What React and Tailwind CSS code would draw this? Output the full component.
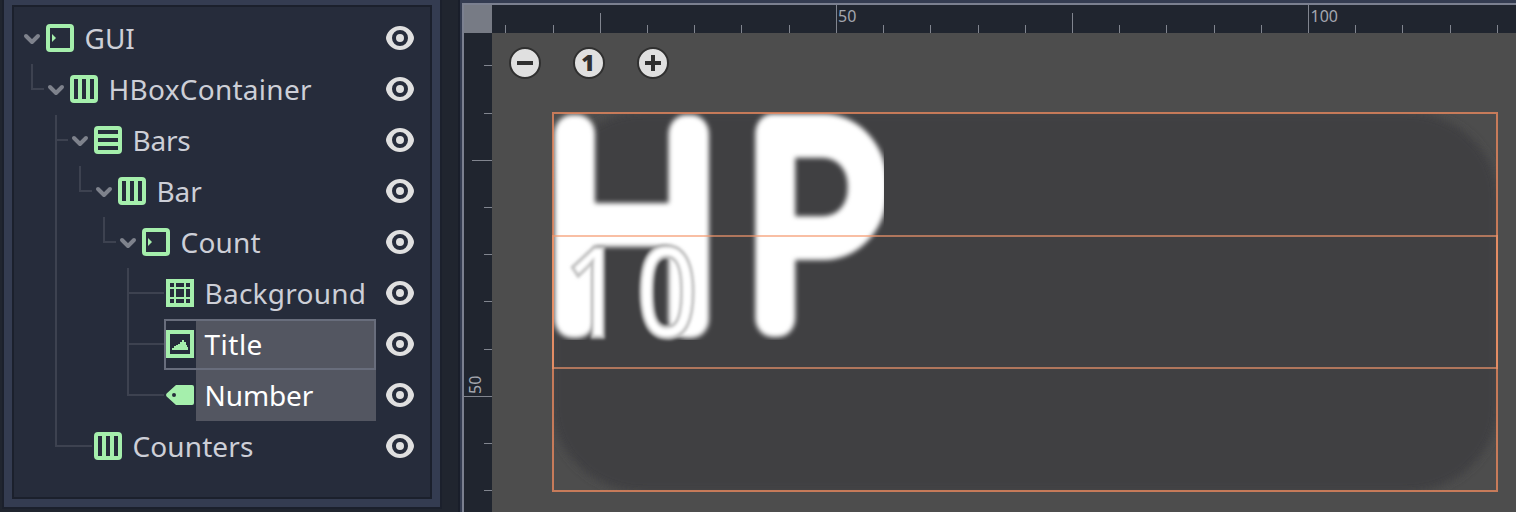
import React from 'react';

const GREEN = '#a5efac';

function ControlIcon() {
  return (
    <svg width="32" height="32" viewBox="0 0 32 32">
      <rect x="4" y="4" width="24" height="24" rx="2" fill="none" stroke={GREEN} strokeWidth="4" />
      <path d="M8 12L12 16L8 20Z" fill={GREEN} />
    </svg>
  );
}

function HBoxIcon() {
  return (
    <svg width="32" height="32" viewBox="0 0 32 32">
      <path
        fill={GREEN}
        fillRule="evenodd"
        d="M6 2H26A4 4 0 0 1 30 6V26A4 4 0 0 1 26 30H6A4 4 0 0 1 2 26V6A4 4 0 0 1 6 2ZM6 6V26H10V6ZM14 6V26H18V6ZM22 6V26H26V6Z"
      />
    </svg>
  );
}

function VBoxIcon() {
  return (
    <svg width="32" height="32" viewBox="0 0 32 32">
      <path
        fill={GREEN}
        fillRule="evenodd"
        d="M6 2H26A4 4 0 0 1 30 6V26A4 4 0 0 1 26 30H6A4 4 0 0 1 2 26V6A4 4 0 0 1 6 2ZM6 6V10H26V6ZM6 14V18H26V14ZM6 22V26H26V22Z"
      />
    </svg>
  );
}

function NinePatchIcon() {
  return (
    <svg width="32" height="32" viewBox="0 0 32 32">
      <path
        fill={GREEN}
        fillRule="evenodd"
        d="M2 2H30V30H2ZM6 6V10H10V6ZM12 6V10H20V6ZM22 6V10H26V6ZM6 12V20H10V12ZM12 12V20H20V12ZM22 12V20H26V12ZM6 22V26H10V22ZM12 22V26H20V22ZM22 22V26H26V22Z"
      />
    </svg>
  );
}

function TextureIcon() {
  return (
    <svg width="32" height="32" viewBox="0 0 32 32" shapeRendering="crispEdges">
      <path fill={GREEN} fillRule="evenodd" d="M2 2H30V30H2ZM6 6V26H26V6Z" />
      <path fill={GREEN} d="M8 22V20H10V18H12V17H14V16H16V14H18V12H20V14H22V17H23V19H24V22Z" />
    </svg>
  );
}

function LabelIcon() {
  return (
    <svg width="32" height="32" viewBox="0 0 32 32">
      <path fill={GREEN} fillRule="evenodd" d="M12 6H28A2 2 0 0 1 30 8V24A2 2 0 0 1 28 26H12L2.6 17.5Q1.4 16 2.6 14.5ZM10 14A2 2 0 1 0 10 18A2 2 0 1 0 10 14Z" />
    </svg>
  );
}

function EyeIcon() {
  return (
    <svg width="32" height="32" viewBox="0 0 32 32">
      <path
        fill="#e0e0e0"
        fillRule="evenodd"
        d="M16 4C9.5 4 4 8.500 2.200 14.500Q1.800 16 2.200 17.500C4 23.500 9.500 28 16 28S28 23.500 29.800 17.500Q30.200 16 29.800 14.500C28 8.500 22.500 4 16 4ZM16 8A8 8 0 1 1 16 24A8 8 0 1 1 16 8ZM16 12A4 4 0 1 0 16 20A4 4 0 1 0 16 12Z"
      />
    </svg>
  );
}

function Arrow() {
  return (
    <svg width="20" height="32" viewBox="0 0 20 32" className="shrink-0">
      <path d="M4 14L10 20L16 14" fill="none" stroke="#7e828c" strokeWidth="4" strokeLinecap="round" strokeLinejoin="round" />
    </svg>
  );
}

const nodes = [
  { name: 'GUI', Icon: ControlIcon, pad: 'pl-[8px]', track: 'tracking-[0px]', arrow: true },
  { name: 'HBoxContainer', Icon: HBoxIcon, pad: 'pl-[32px]', track: 'tracking-[0.27px]', arrow: true },
  { name: 'Bars', Icon: VBoxIcon, pad: 'pl-[56px]', track: 'tracking-[-0.2px]', arrow: true },
  { name: 'Bar', Icon: HBoxIcon, pad: 'pl-[80px]', track: 'tracking-[-0.1px]', arrow: true },
  { name: 'Count', Icon: ControlIcon, pad: 'pl-[104px]', track: 'tracking-[0.2px]', arrow: true },
  { name: 'Background', Icon: NinePatchIcon, pad: 'pl-[150px]', track: 'tracking-[0.25px]' },
  { name: 'Title', Icon: TextureIcon, pad: 'pl-[150px]', track: 'tracking-[0.5px]', selected: true, focused: true },
  { name: 'Number', Icon: LabelIcon, pad: 'pl-[150px]', track: 'tracking-[-0.1px]', selected: true },
  { name: 'Counters', Icon: HBoxIcon, pad: 'pl-[78px]', track: 'tracking-[0.1px]' },
];

function TreeRow({ name, Icon, pad, track, arrow, selected, focused }) {
  return (
    <div className={`flex h-[51px] w-[416px] ${pad}`}>
      {arrow && <div className="mr-[2px] flex h-[50px] items-center"><Arrow /></div>}
      <div className="relative flex min-w-0 flex-1 items-stretch">
        <div className="flex h-[50px] w-[32px] shrink-0 items-center"><Icon /></div>
        <div
          className={`flex flex-1 items-center pl-[8.5px] text-[28px] leading-[51px] whitespace-nowrap ${track} ${
            selected ? 'bg-[#535661] text-white' : 'text-[#cdcfd7]'
          }`}
        >
          {name}
        </div>
        {focused && <div className="absolute inset-0 border-2 border-[#686d7c]" />}
      </div>
      <div className="flex h-[50px] w-[54px] shrink-0 items-center pl-[8px]"><EyeIcon /></div>
    </div>
  );
}

function TreeLines() {
  return (
    <svg className="absolute top-0 left-0" width="416" height="490" viewBox="14 7 416 490">
      <path
        fill="none"
        stroke="#3d4250"
        strokeWidth="2"
        d="M32 64V89H44M56 115V446H92M56 140H68M80 166V191H92M104 217V242H116M128 268V395H164M128 293H164M128 344H164"
      />
    </svg>
  );
}

function ScenePanel() {
  return (
    <div className="flex h-[512px] w-[460px] shrink-0 bg-[#20252f] pl-[2px] border-r-2 border-[#191e2a]">
      <div className="h-[509px] w-[440px] border-x-2 border-b-2 border-[#1b202c] bg-[#343c51] px-[8px] pt-[5px]">
        <div className="relative h-[494px] w-[420px] border-2 border-[#1b202c] bg-[#262c3b] pt-[6px]">
          <TreeLines />
          <div className="relative flex flex-col">
            {nodes.map((n) => <TreeRow key={n.name} {...n} />)}
          </div>
        </div>
      </div>
    </div>
  );
}

const xTicks = [505, 553, 600, 647, 694, 741, 789, 836, 883, 930, 978, 1025, 1072, 1119, 1166, 1214, 1261, 1308, 1355, 1402, 1450, 1497];
const yTicks = [65, 113, 160, 207, 254, 301, 349, 396, 443, 490];

function TopRuler() {
  return (
    <svg width="1024" height="28" viewBox="492 5 1024 28" className="bg-[#20252f]">
      {xTicks.map((x) => {
        const top = x === 836 || x === 1308 ? 5 : x === 600 || x === 1072 ? 13 : 25;
        return <rect key={x} x={x} y={top} width="1" height={33 - top} fill="#81858f" />;
      })}
      <text x="838" y="22" fontSize="16" fill="#a4a7af">50</text>
      <text x="1310.500" y="22" fontSize="16" fill="#a4a7af">100</text>
    </svg>
  );
}

function SideRuler() {
  return (
    <svg width="28" height="479" viewBox="464 33 28 479" className="bg-[#20252f]">
      {yTicks.map((y) => {
        const left = y === 396 ? 464 : y === 160 ? 472 : 484;
        return <rect key={y} x={left} y={y} width={492 - left} height="1" fill="#81858f" />;
      })}
      <text transform="translate(481 394) rotate(-90)" fontSize="16" fill="#a4a7af">50</text>
    </svg>
  );
}

function ZoomButton({ children }) {
  return (
    <svg width="32" height="32" viewBox="0 0 32 32">
      <circle cx="16" cy="16" r="15" fill="#e0e0e0" stroke="#303030" strokeWidth="2" />
      {children}
    </svg>
  );
}

function CanvasDrawing() {
  return (
    <svg className="absolute top-0 left-0" width="1024" height="479" viewBox="492 33 1024 479">
      <defs>
        <filter id="soft" x="-10%" y="-10%" width="120%" height="120%"><feGaussianBlur stdDeviation="4" /></filter>
        <filter id="texel" x="-10%" y="-10%" width="120%" height="120%"><feGaussianBlur stdDeviation="2.4" /></filter>
        <filter id="thin" x="-10%" y="-10%" width="120%" height="120%"><feGaussianBlur stdDeviation="1.5" /></filter>
        <clipPath id="frame"><rect x="553" y="113" width="944" height="378" /></clipPath>
        <clipPath id="title"><rect x="553" y="113" width="331" height="227" /></clipPath>
      </defs>
      <g clipPath="url(#frame)">
        <rect x="552" y="112" width="946" height="380" rx="92" ry="88" fill="#414143" filter="url(#soft)" />
      </g>
      <g clipPath="url(#title)">
        <g filter="url(#texel)" fill="#fff" stroke="#fff" strokeWidth="38" strokeLinejoin="round" fontFamily="Inter, sans-serif" fontWeight="100">
          <text transform="translate(545.5 318.500) scale(0.925 1)" fontSize="254">H</text>
          <text transform="translate(746.5 317.500) scale(0.91 1)" fontSize="254">P</text>
        </g>
      </g>
      <g filter="url(#thin)" fill="#fff" stroke="#c0c0c0" strokeWidth="3.5" fontFamily="'Noto Sans', sans-serif" fontWeight="500">
        <text transform="translate(564 337) scale(0.84 1)" fontSize="126">1</text>
        <text transform="translate(636 337) scale(0.86 1)" fontSize="126">0</text>
      </g>
      <g fill="none" strokeWidth="2">
        <rect x="553" y="113" width="944" height="378" stroke="#f68e60" strokeOpacity="0.72" />
        <rect x="553" y="236" width="944" height="132" stroke="#f5986c" strokeOpacity="0.62" />
      </g>
    </svg>
  );
}

function Viewport() {
  return (
    <div className="flex min-w-0 flex-1 flex-col border-l-2 border-[#343c51] bg-[#343c51] pt-[3px]">
      <div className="flex flex-1 flex-col border-t-2 border-l-2 border-[#7b8090]">
        <div className="flex h-[28px]">
          <div className="h-[28px] w-[28px] shrink-0 bg-[#777b85]" />
          <TopRuler />
        </div>
        <div className="flex h-[479px]">
          <SideRuler />
          <div className="relative h-[479px] flex-1 bg-[#4d4d4d]">
            <CanvasDrawing />
            <div className="relative flex gap-[32px] pt-[14px] pl-[17px]">
              <ZoomButton><path d="M8 16H24" stroke="#303030" strokeWidth="4" /></ZoomButton>
              <ZoomButton>
                <text x="15" y="24" textAnchor="middle" fontSize="23" fontWeight="800" fontFamily="'Open Sans', 'Noto Sans', sans-serif" fill="#303030">1</text>
              </ZoomButton>
              <ZoomButton><path d="M8 16H24M16 8V24" stroke="#303030" strokeWidth="4" /></ZoomButton>
            </div>
          </div>
        </div>
      </div>
    </div>
  );
}

export default function App() {
  return (
    <div className="flex h-[512px] w-[1516px] overflow-hidden bg-[#20252f] font-['Noto_Sans',sans-serif]">
      <ScenePanel />
      <Viewport />
    </div>
  );
}
